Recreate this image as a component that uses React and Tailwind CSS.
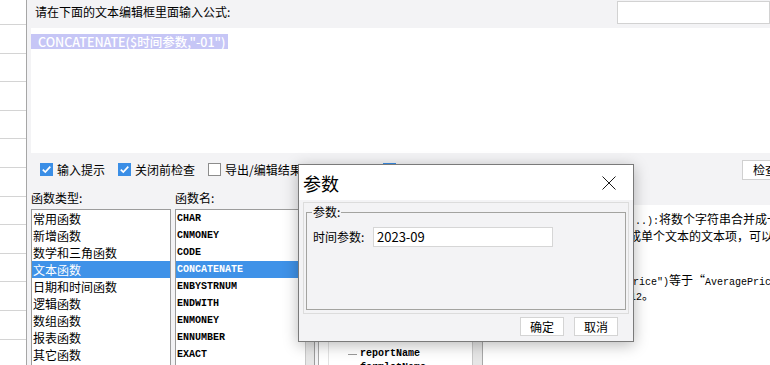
import { useState } from "react";

const ui = "font-['Noto_Sans_CJK_SC',sans-serif]";
const mono = "font-['Liberation_Mono',monospace]";

const categories = [
  "常用函数",
  "新增函数",
  "数学和三角函数",
  "文本函数",
  "日期和时间函数",
  "逻辑函数",
  "数组函数",
  "报表函数",
  "其它函数",
];

const functionNames = [
  "CHAR",
  "CNMONEY",
  "CODE",
  "CONCATENATE",
  "ENBYSTRNUM",
  "ENDWITH",
  "ENMONEY",
  "ENNUMBER",
  "EXACT",
];

const treeItems = [
  "参数",
  "$时间参数",
  "$$page_number",
  "$$totalPage_number",
  "servletURL",
  "serverSchema",
  "serverURL",
  "SessionID",
  "NOFILTER",
  "reportName",
  "formletName",
];

const CheckBox = ({ checked }) =>
  checked ? (
    <span className="w-[13px] h-[13px] shrink-0 bg-[#3a8ee6] flex items-center justify-center">
      <svg width="11" height="11" viewBox="0 0 11 11">
        <path d="M1.8 5.6 L4.3 8.1 L9.3 2.6" stroke="white" strokeWidth="1.7" fill="none" />
      </svg>
    </span>
  ) : (
    <span className="w-[13px] h-[13px] shrink-0 border border-[#8c8c8c] bg-white" />
  );

const App = () => {
  const [category, setCategory] = useState(3);
  const [fn, setFn] = useState(3);

  return (
    <div className={`relative w-[770px] h-[365px] overflow-hidden bg-[#f3f3f5] flex text-black ${ui}`}>
      {/* left sheet strip */}
      <div className="w-[27px] h-full bg-white border-r border-[#a6a6a6] overflow-hidden shrink-0">
        <div className="mt-[-3.6px]">
          {Array.from({ length: 14 }).map((_, i) => (
            <div key={i} className="h-[28.6px] border-b border-[#d4d4d4]" />
          ))}
        </div>
      </div>

      {/* formula editor */}
      <div className="flex-1 flex flex-col min-w-0">
        <div className="h-[28px] flex items-start shrink-0">
          <span className="ml-[8px] mt-[5px] text-[12px] leading-[14px]">请在下面的文本编辑框里面输入公式:</span>
          <div className="ml-auto mt-[1px] w-[153px] h-[23px] bg-white border border-[#d2d2d2]" />
        </div>

        <div className="ml-[4px] h-[125px] bg-white shrink-0">
          <div className="inline-block h-[15px] bg-[#c6c6f6] text-white text-[12.5px] font-medium leading-[15px] pl-[7px] pr-[2px] whitespace-nowrap">
            CONCATENATE($时间参数,"-01")
          </div>
        </div>

        <div className="h-[33px] shrink-0 flex items-center pl-[13px] text-[12px] leading-[14px] whitespace-nowrap">
          <CheckBox checked />
          <span className="ml-[4px] w-[61px] shrink-0">输入提示</span>
          <CheckBox checked />
          <span className="ml-[4px] w-[73px] shrink-0">关闭前检查</span>
          <CheckBox />
          <span className="ml-[4px] w-[158px] shrink-0 overflow-hidden">导出/编辑结果中保留公式格式</span>
          <CheckBox checked />
          <span className="ml-[4px] w-[170px] shrink-0 overflow-hidden">编辑时将输入内容格式化为公式</span>
          <button className="ml-auto mr-[-12px] w-[40px] h-[20px] shrink-0 bg-white border border-[#d0d0d0] text-[12px] text-left pl-[10px]">
            检查
          </button>
        </div>

        <div className="flex-1 flex min-h-0">
          {/* function type */}
          <div className="ml-[4px] w-[140px] shrink-0 flex flex-col">
            <div className="h-[23px] shrink-0 flex items-center text-[12px]">函数类型:</div>
            <div className="flex-1 bg-white border border-[#9c9c9c] border-b-0">
              {categories.map((c, i) => (
                <div
                  key={c}
                  onClick={() => setCategory(i)}
                  className={`h-[17px] pl-[1px] text-[12px] leading-[17px] whitespace-nowrap ${
                    i === category ? "bg-[#3f92e8] text-white" : ""
                  }`}
                >
                  {c}
                </div>
              ))}
            </div>
          </div>

          {/* function name */}
          <div className="ml-[4px] w-[140px] shrink-0 flex flex-col">
            <div className="h-[23px] shrink-0 flex items-center text-[12px]">函数名:</div>
            <div className="flex-1 bg-white border border-[#9c9c9c] border-b-0 flex">
              <div className="flex-1">
                {functionNames.map((n, i) => (
                  <div
                    key={n}
                    onClick={() => setFn(i)}
                    className={`h-[17px] pl-[1px] text-[10px] font-bold leading-[17px] ${mono} ${
                      i === fn ? "bg-[#3f92e8] text-white" : ""
                    }`}
                  >
                    {n}
                  </div>
                ))}
              </div>
              <div className="w-[9px] bg-[#e6e6e6] border-l border-[#c8c8c8]" />
            </div>
          </div>

          {/* parameter tree */}
          <div className="ml-[3px] w-[165px] shrink-0 flex flex-col">
            <div className="h-[23px] shrink-0" />
            <div className="flex-1 min-h-0 overflow-hidden bg-white border border-[#a8a8a8] border-b-0 flex">
              <div className="relative flex-1 pt-[11px]">
                <div className="absolute left-[9px] top-0 bottom-0 border-l border-[#e2e2e2]" />
                {treeItems.map((t, i) => (
                  <div key={t} className="h-[14px] flex items-center whitespace-nowrap">
                    {i > 0 && <span className="ml-[29px] w-[9px] border-t border-[#9a9a9a]" />}
                    <span className={`ml-[3px] text-[10px] font-bold leading-[14px] ${i > 0 ? mono : ""}`}>{t}</span>
                  </div>
                ))}
              </div>
              <div className="w-[10px] bg-[#e6e6e6] border-l border-[#c8c8c8]" />
            </div>
          </div>

          {/* description */}
          <div className="flex-1 min-w-0 pt-[19px] flex flex-col">
            <div className="flex-1 bg-white pl-[5px] pt-[6px] text-[12px] whitespace-nowrap overflow-hidden">
              <div className="h-[17px] leading-[16px]">
                <span className={`inline-block w-[141px] overflow-hidden align-top text-[10px] ${mono}`}>CONCATENATE(text1,text2,</span>
                <span className={`text-[10px] ${mono}`}>...):</span>
                <span>将数个字符串合并成一个字符串。</span>
              </div>
              <div className="h-[16px] leading-[16px]">
                <span className="inline-block w-[141px] overflow-hidden align-top">Text1,text2,...:需要合并</span>
                <span>成单个文本的文本项，可以是字符串、数字或是单个单元格的引用。</span>
              </div>
              <div className="h-[14px] leading-[14px]">备注:</div>
              <div className="h-[14px] leading-[14px]">示例:</div>
              <div className="h-[15px] leading-[15px]">
                <span className={`inline-block w-[145px] overflow-hidden align-top text-[10px] ${mono}`}>CONCATENATE("Average ","P</span>
                <span className={`text-[10px] ${mono}`}>rice")</span>
                <span>等于“</span>
                <span className={`text-[10px] ${mono}`}>AveragePrice</span>
                <span>”。</span>
              </div>
              <div className="h-[15px] leading-[15px]">
                <span className={`inline-block w-[142px] overflow-hidden align-top text-[10px] ${mono}`}>CONCATENATE("1","2")等于</span>
                <span className={`text-[10px] ${mono}`}>12</span>
                <span>。</span>
              </div>
            </div>
          </div>
        </div>
      </div>

      {/* parameter dialog */}
      <div className="absolute left-[298px] top-[164px] w-[336px] h-[178px] bg-[#f3f3f5] border border-[#7a7a7a] shadow-[0_3px_14px_rgba(0,0,0,0.28)] flex flex-col">
        <div className="h-[35px] bg-white flex items-center">
          <span className="ml-[4px] text-[18px] leading-[20px]">参数</span>
          <svg className="ml-auto mr-[17px]" width="14" height="14" viewBox="0 0 14 14">
            <path d="M0.5 0.5 L13.5 13.5 M13.5 0.5 L0.5 13.5" stroke="#1a1a1a" strokeWidth="1" />
          </svg>
        </div>
        <div className="mx-[4px] mt-[2px] h-[112px] border border-[#dcdcdc] p-[2px]">
          <div className="relative mt-[7px] h-[98px] border border-[#a3a3a0]">
            <span className="absolute left-[5px] top-[-8px] px-[1px] bg-[#f3f3f5] text-[12px] leading-[14px]">参数:</span>
            <div className="mt-[14px] flex items-center">
              <span className="ml-[6px] w-[60px] text-[12px]">时间参数:</span>
              <div className="w-[180px] h-[20px] bg-white border border-[#d6d6d6] flex items-center pl-[3px] text-[13px]">
                2023-09
              </div>
            </div>
          </div>
        </div>
        <div className="flex justify-end items-center gap-[10px] mt-[3px] mr-[15px]">
          <button className="w-[44px] h-[19px] bg-white border border-[#d4d4d4] text-[12px] leading-[17px]">确定</button>
          <button className="w-[44px] h-[19px] bg-white border border-[#d4d4d4] text-[12px] leading-[17px]">取消</button>
        </div>
      </div>
    </div>
  );
};

export default App;
